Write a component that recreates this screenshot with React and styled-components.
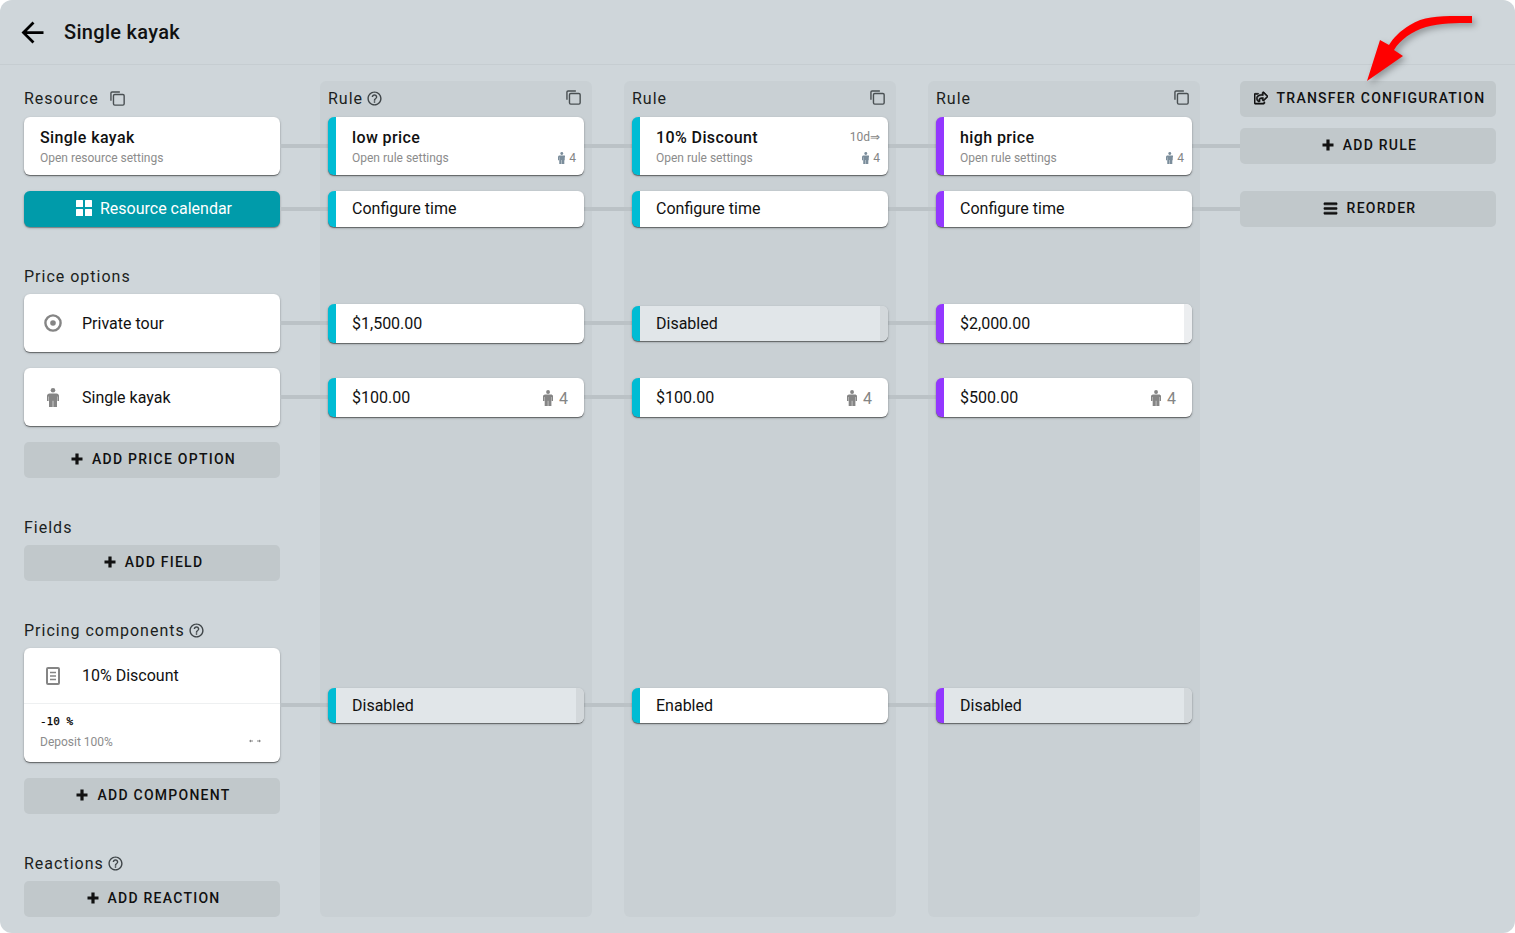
import React from "react";
import styled, { createGlobalStyle } from "styled-components";
import { FaBars, FaRegShareSquare } from "react-icons/fa";
import { MdArrowBack, MdHelpOutline } from "react-icons/md";

const CYAN = "#00bcd4";
const PURPLE = "#9337ff";

const rules = [
  {
    id: "low",
    accent: CYAN,
    help: true,
    name: "low price",
    days: null,
    prices: [
      { text: "$1,500.00" },
      { text: "$100.00", count: 4 },
    ],
    component: "Disabled",
  },
  {
    id: "discount",
    accent: CYAN,
    name: "10% Discount",
    days: "10d⇒",
    prices: [
      { text: "Disabled", off: true },
      { text: "$100.00", count: 4 },
    ],
    component: "Enabled",
  },
  {
    id: "high",
    accent: PURPLE,
    name: "high price",
    days: null,
    prices: [
      { text: "$2,000.00", edge: true },
      { text: "$500.00", count: 4 },
    ],
    component: "Disabled",
  },
];

function App() {
  return (
    <Page>
      <GlobalStyle />
      <Header>
        <BackButton>
          <MdArrowBack size={33} />
        </BackButton>
        <Title>Single kayak</Title>
      </Header>

      <Board>
        <SideColumn>
          <Heading $top>
            Resource
            <CopyIcon $ml={11} />
          </Heading>
          <Stack>
            <Card $h={58}>
              <CardName>Single kayak</CardName>
              <CardHint>Open resource settings</CardHint>
            </Card>
            <CalendarButton>
              <GridIcon />
              Resource calendar
            </CalendarButton>
          </Stack>

          <Section>
            <Heading>Price options</Heading>
            <Stack>
              <OptionCard>
                <OptionIcon>
                  <RadioIcon />
                </OptionIcon>
                Private tour
              </OptionCard>
              <OptionCard>
                <OptionIcon>
                  <PersonIcon $height={19} />
                </OptionIcon>
                Single kayak
              </OptionCard>
              <GhostButton>
                <PlusIcon />
                Add price option
              </GhostButton>
            </Stack>
          </Section>

          <Section>
            <Heading>Fields</Heading>
            <GhostButton>
              <PlusIcon />
              Add field
            </GhostButton>
          </Section>

          <Section>
            <Heading>
              Pricing components
              <HelpIcon />
            </Heading>
            <Stack>
              <ComponentCard>
                <ComponentTop>
                  <OptionIcon>
                    <DocumentIcon />
                  </OptionIcon>
                  10% Discount
                </ComponentTop>
                <ComponentBody>
                  <Code>-10 %</Code>
                  <ComponentFoot>
                    <CardHint>Deposit 100%</CardHint>
                    <SwapIcon />
                  </ComponentFoot>
                </ComponentBody>
              </ComponentCard>
              <GhostButton>
                <PlusIcon />
                Add component
              </GhostButton>
            </Stack>
          </Section>

          <Section>
            <Heading>
              Reactions
              <HelpIcon />
            </Heading>
            <GhostButton>
              <PlusIcon />
              Add reaction
            </GhostButton>
          </Section>
        </SideColumn>

        {rules.map((rule) => (
          <RuleColumn key={rule.id}>
            <Heading $top>
              Rule
              {rule.help && <HelpIcon />}
              <CopyIcon $push />
            </Heading>

            <Slot $h={58}>
              <RuleCard $accent={rule.accent} $fill>
                <RuleTop>
                  <CardName>{rule.name}</CardName>
                  {rule.days && <Days>{rule.days}</Days>}
                </RuleTop>
                <RuleBottom>
                  <CardHint>Open rule settings</CardHint>
                  <Count $small>
                    <PersonIcon $height={12} $tint="#7b8d9b" />4
                  </Count>
                </RuleBottom>
              </RuleCard>
            </Slot>

            <Slot $h={36} $mt={16}>
              <RuleCard $accent={rule.accent} $h={36} $lift>
                Configure time
              </RuleCard>
            </Slot>

            <Slot $h={58} $mt={67}>
              <PriceCell rule={rule} price={rule.prices[0]} />
            </Slot>

            <Slot $h={58} $mt={16}>
              <PriceCell rule={rule} price={rule.prices[1]} />
            </Slot>

            <Slot $h={114} $mt={222}>
              <RuleCard
                $accent={rule.accent}
                $h={35}
                $off={rule.component === "Disabled"}
              >
                {rule.component}
              </RuleCard>
            </Slot>
          </RuleColumn>
        ))}

        <ActionColumn>
          <GhostButton $iconWeight={24}>
            <FaRegShareSquare size={14} />
            Transfer configuration
          </GhostButton>
          <Slot $h={58}>
            <GhostButton>
              <PlusIcon />
              Add rule
            </GhostButton>
          </Slot>
          <Slot $h={36} $mt={16}>
            <GhostButton $iconWeight={20}>
              <FaBars size={15} />
              Reorder
            </GhostButton>
          </Slot>
        </ActionColumn>
      </Board>

      <RedArrow viewBox="0 0 120 80" aria-hidden="true">
        <path d="M112 3 C82 3 66 2 50 12 C40 18 33 25 29 32 L20 27 L7 68 L43 43 L34 37 C40 27 52 18 66 14 C80 10 96 10 112 10 Z" />
      </RedArrow>
    </Page>
  );
}

export default App;

function PriceCell({ rule, price }) {
  const height = price.off ? 35 : 39;
  return (
    <RuleCard $accent={rule.accent} $h={height} $off={price.off} $edge={price.edge}>
      {price.text}
      {price.count && (
        <Count>
          <PersonIcon $height={16} />
          {price.count}
        </Count>
      )}
    </RuleCard>
  );
}

function PersonIcon({ $height, $tint = "#858585" }) {
  return (
    <svg width={($height * 12) / 19} height={$height} viewBox="0 0 12 19" fill={$tint}>
      <circle cx="6" cy="2.3" r="2.3" />
      <path d="M2.5 5.4h7c1.4 0 2.5 1 2.5 2.4V13h-1.6V8.4h-.4V19H6.3v-6.2h-.6V19H2V8.4h-.4V13H0V7.8C0 6.4 1.1 5.4 2.5 5.4z" />
    </svg>
  );
}

function DocumentIcon() {
  return (
    <svg width="16" height="20" viewBox="0 0 16 20" fill="none" stroke="#858585" strokeWidth="2">
      <rect x="2" y="2" width="12" height="16" rx="1" />
      <path d="M5 6.5h6M5 10h6M5 13.5h6" strokeWidth="1.7" />
    </svg>
  );
}

function RadioIcon() {
  return (
    <svg width="18" height="18" viewBox="0 0 18 18" fill="#858585">
      <circle cx="9" cy="9" r="7.6" fill="none" stroke="#858585" strokeWidth="2.4" />
      <circle cx="9" cy="9" r="2.8" />
    </svg>
  );
}

function GridIcon() {
  return (
    <svg width="16" height="16" viewBox="0 0 16 16" fill="#fff">
      <rect width="7" height="7" rx="0.5" />
      <rect x="9" width="7" height="7" rx="0.5" />
      <rect y="9" width="7" height="7" rx="0.5" />
      <rect x="9" y="9" width="7" height="7" rx="0.5" />
    </svg>
  );
}

function PlusIcon() {
  return (
    <svg width="12" height="12" viewBox="0 0 12 12" fill="currentColor">
      <path d="M4.4 0.5h3.2v3.9h3.9v3.2H7.6v3.9H4.4V7.6H0.5V4.4h3.9z" />
    </svg>
  );
}

function SwapIcon() {
  return (
    <svg width="14" height="6" viewBox="0 0 14 6" fill="#858585">
      <path d="M1 3l2-1.5v1h2v1H3v1zM13 3l-2-1.5v1H9v1h2v1z" />
    </svg>
  );
}

const CopyGlyph = ({ className }) => (
  <svg className={className} width="15" height="15" viewBox="0 0 16 16" fill="none" stroke="#4a5053" strokeWidth="1.5">
    <path d="M1 10.5V2.2C1 1.5 1.5 1 2.2 1h8.3" />
    <rect x="3.7" y="3.7" width="11.4" height="11.4" rx="1.4" />
  </svg>
);

const CopyIcon = styled(CopyGlyph)`
  flex-shrink: 0;
  margin-left: ${(p) => (p.$push ? "auto" : `${p.$ml || 0}px`)};
  margin-right: ${(p) => (p.$push ? "3px" : "0")};
  margin-top: ${(p) => (p.$push ? "-2px" : "1px")};
`;

const HelpIcon = styled(MdHelpOutline).attrs({ size: 17 })`
  color: #3f4548;
  margin-left: 3px;
`;

const GlobalStyle = createGlobalStyle`
  html, body {
    margin: 0;
    background: #fff;
  }

  body {
    font-family: Roboto, "Liberation Sans", sans-serif;
    color: #111;
  }
`;

const Page = styled.div`
  position: relative;
  width: 1515px;
  height: 933px;
  overflow: hidden;
  border-radius: 12px;
  background: #cfd6da;
`;

const Header = styled.header`
  display: flex;
  align-items: center;
  height: 64px;
  padding-left: 16px;
  border-bottom: 1px solid #c6cdd1;
`;

const BackButton = styled.div`
  display: flex;
  width: 48px;
  color: #000;
`;

const Title = styled.h1`
  margin: 0;
  font-size: 20px;
  font-weight: 500;
  letter-spacing: 0.3px;
`;

const Board = styled.main`
  display: flex;
  align-items: stretch;
  gap: 32px;
  padding: 16px 19px 16px 24px;
`;

const SideColumn = styled.div`
  display: flex;
  flex-direction: column;
  width: 256px;
  margin-right: 8px;
`;

const RuleColumn = styled.section`
  display: flex;
  flex-direction: column;
  width: 272px;
  box-sizing: border-box;
  padding: 0 8px;
  border-radius: 6px;
  background: #c9d0d4;
`;

const ActionColumn = styled.div`
  display: flex;
  flex-direction: column;
  width: 256px;
  margin-left: 8px;
`;

const Section = styled.div`
  margin-top: 31px;
`;

const Stack = styled.div`
  display: flex;
  flex-direction: column;
  gap: 16px;
`;

const Heading = styled.h2`
  display: flex;
  align-items: center;
  box-sizing: border-box;
  height: 36px;
  margin: 0;
  padding-bottom: ${(p) => (p.$top ? 2 : 0)}px;
  font-size: 16px;
  font-weight: 400;
  letter-spacing: 1px;
  color: #1c1f21;
`;

const Slot = styled.div`
  position: relative;
  display: flex;
  align-items: center;
  height: ${(p) => p.$h}px;
  margin-top: ${(p) => p.$mt || 0}px;

  &::before {
    content: "";
    position: absolute;
    top: 50%;
    left: -48px;
    width: 48px;
    height: 4px;
    margin-top: -2px;
    background: #bbc2c6;
  }
`;

const Card = styled.div`
  display: flex;
  flex-direction: column;
  justify-content: center;
  box-sizing: border-box;
  height: ${(p) => p.$h}px;
  padding: 2px 0 0 16px;
  border-radius: 6px;
  background: #fff;
  box-shadow: 0 1px 1px rgba(0, 0, 0, 0.45), 0 1px 3px rgba(0, 0, 0, 0.2);
`;

const CardName = styled.div`
  font-size: 16px;
  font-weight: 500;
  line-height: 20px;
  letter-spacing: 0.4px;
`;

const CardHint = styled.div`
  font-size: 12px;
  line-height: 16px;
  margin-top: 2px;
  color: #8c8c8c;
`;

const CalendarButton = styled.div`
  display: flex;
  align-items: center;
  justify-content: center;
  box-sizing: border-box;
  gap: 8px;
  height: 36px;
  padding: 0 0 2px 4px;
  border-radius: 6px;
  font-size: 16px;
  color: #fff;
  background: #009baa;
  box-shadow: 0 1px 1px rgba(0, 0, 0, 0.3), 0 1px 3px rgba(0, 0, 0, 0.2);
`;

const OptionCard = styled.div`
  display: flex;
  align-items: center;
  height: 58px;
  border-radius: 6px;
  font-size: 16px;
  background: #fff;
  box-shadow: 0 1px 1px rgba(0, 0, 0, 0.45), 0 1px 3px rgba(0, 0, 0, 0.2);
`;

const OptionIcon = styled.span`
  display: flex;
  justify-content: center;
  width: 58px;
  color: #858585;
`;

const ComponentCard = styled.div`
  height: 114px;
  border-radius: 6px;
  background: #fff;
  box-shadow: 0 1px 1px rgba(0, 0, 0, 0.45), 0 1px 3px rgba(0, 0, 0, 0.2);
`;

const ComponentTop = styled.div`
  display: flex;
  align-items: center;
  height: 55px;
  font-size: 16px;
  border-bottom: 1px solid #eef0f1;
`;

const ComponentBody = styled.div`
  padding: 10px 16px 0;
`;

const Code = styled.div`
  font-family: "DejaVu Sans Mono", monospace;
  font-size: 11px;
  line-height: 16px;
  color: #000;
  -webkit-text-stroke: 0.25px #000;
`;

const ComponentFoot = styled.div`
  display: flex;
  align-items: center;
  justify-content: space-between;
  margin-top: 2px;
  padding-right: 2px;
`;

const RuleCard = styled.div`
  position: relative;
  z-index: 1;
  display: flex;
  flex-direction: column;
  justify-content: center;
  flex: 1;
  box-sizing: border-box;
  height: ${(p) => (p.$fill ? "100%" : `${p.$h}px`)};
  overflow: hidden;
  padding: ${(p) => (p.$fill ? "2px" : "0")} 8px ${(p) => (p.$lift ? "2px" : "0")} 16px;
  border-left: 8px solid ${(p) => p.$accent};
  border-radius: 6px;
  font-size: 16px;
  background: ${(p) => (p.$off ? "#e1e6e9" : "#fff")};
  box-shadow: 0 1px 1px rgba(0, 0, 0, 0.45), 0 1px 3px rgba(0, 0, 0, 0.2);

  ${(p) =>
    (p.$off || p.$edge) &&
    `
    &::after {
      content: "";
      position: absolute;
      top: 0;
      right: 0;
      bottom: 0;
      width: 8px;
      background: ${p.$off ? "#d3d8db" : "#eceef0"};
    }
  `}
`;

const RuleTop = styled.div`
  display: flex;
  justify-content: space-between;
  align-items: center;
`;

const RuleBottom = styled.div`
  display: flex;
  justify-content: space-between;
  align-items: center;
`;

const Days = styled.span`
  margin-top: -2px;
  font-size: 12px;
  color: #858585;
`;

const Count = styled.span`
  position: ${(p) => (p.$small ? "static" : "absolute")};
  top: 11px;
  right: 16px;
  display: flex;
  align-items: center;
  gap: ${(p) => (p.$small ? 4 : 6)}px;
  margin-top: ${(p) => (p.$small ? 2 : 0)}px;
  font-size: ${(p) => (p.$small ? 12 : 16)}px;
  color: #858585;
`;

const GhostButton = styled.div`
  display: flex;
  align-items: center;
  justify-content: center;
  box-sizing: border-box;
  gap: 9px;
  width: 100%;
  height: 36px;
  padding: 0 0 2px 3px;
  border-radius: 5px;
  font-size: 14px;
  font-weight: 500;
  letter-spacing: 1.25px;
  text-transform: uppercase;
  color: #111;
  background: #c1c8cb;

  svg {
    flex-shrink: 0;
  }

  svg path {
    stroke: currentColor;
    stroke-width: ${(p) => p.$iconWeight || 0};
  }
`;

const RedArrow = styled.svg`
  position: absolute;
  top: 13px;
  left: 1360px;
  width: 120px;
  height: 80px;
  fill: #ff0000;
  filter: drop-shadow(3px 3px 3px rgba(0, 0, 0, 0.3));
`;
